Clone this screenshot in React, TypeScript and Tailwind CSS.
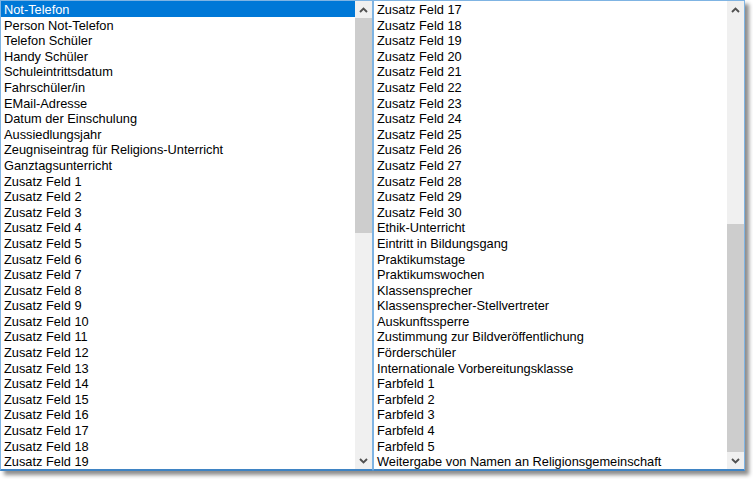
import React from "react"

const leftItems = [
  "Not-Telefon",
  "Person Not-Telefon",
  "Telefon Schüler",
  "Handy Schüler",
  "Schuleintrittsdatum",
  "Fahrschüler/in",
  "EMail-Adresse",
  "Datum der Einschulung",
  "Aussiedlungsjahr",
  "Zeugniseintrag für Religions-Unterricht",
  "Ganztagsunterricht",
  ...Array.from({ length: 19 }, (_, i) => `Zusatz Feld ${i + 1}`),
]

const rightItems = [
  ...Array.from({ length: 14 }, (_, i) => `Zusatz Feld ${i + 17}`),
  "Ethik-Unterricht",
  "Eintritt in Bildungsgang",
  "Praktikumstage",
  "Praktikumswochen",
  "Klassensprecher",
  "Klassensprecher-Stellvertreter",
  "Auskunftssperre",
  "Zustimmung zur Bildveröffentlichung",
  "Förderschüler",
  "Internationale Vorbereitungsklasse",
  "Farbfeld 1",
  "Farbfeld 2",
  "Farbfeld 3",
  "Farbfeld 4",
  "Farbfeld 5",
  "Weitergabe von Namen an Religionsgemeinschaft",
]

const Chevron = ({ up }: { up?: boolean }) => (
  <svg width="9" height="6" viewBox="0 0 9 6" className="block">
    <path
      d={up ? "M1 5 L4.5 1.5 L8 5" : "M1 1 L4.5 4.5 L8 1"}
      fill="none"
      stroke="#505050"
      strokeWidth="1.9"
    />
  </svg>
)

// thumbTop / thumbHeight in px relative to the track
const ScrollBar = ({ thumbTop, thumbHeight }: { thumbTop: number; thumbHeight: number }) => (
  <div className="flex w-[17px] shrink-0 flex-col bg-[#f0f0f0]">
    <div className="flex h-[17px] items-center justify-center">
      <Chevron up />
    </div>
    <div className="relative flex-1">
      <div
        className="absolute left-0 right-0 bg-[#cdcdcd]"
        style={{ top: thumbTop, height: thumbHeight }}
      />
    </div>
    <div className="flex h-[17px] items-center justify-center">
      <Chevron />
    </div>
  </div>
)

const ListBox = ({
  items,
  selected,
  thumbTop,
  thumbHeight,
  className,
}: {
  items: string[]
  selected?: number
  thumbTop: number
  thumbHeight: number
  className?: string
}) => (
  <div
    className={`flex h-full border border-[#7fb4e3] border-b-2 border-b-[#3f84c4] bg-white ${className ?? ""}`}
  >
    <div className="flex-1 overflow-hidden">
      {items.map((item, i) => (
        <div
          key={item}
          className={`h-[15.6px] whitespace-nowrap pl-[3px] pt-[1px] text-[12.8px] leading-[15px] ${
            i === selected ? "bg-[#0078d7] text-white" : "text-black"
          }`}
        >
          {item}
        </div>
      ))}
    </div>
    <ScrollBar thumbTop={thumbTop} thumbHeight={thumbHeight} />
  </div>
)

export default function App() {
  return (
    <div
      className="h-[479px] w-[753px] bg-white"
      style={{ fontFamily: '"Liberation Sans", Arial, sans-serif' }}
    >
      <div className="flex h-[471px] w-[745px] shadow-[4px_4px_4px_rgba(0,0,0,0.45)]">
        <ListBox
          items={leftItems}
          selected={0}
          thumbTop={0}
          thumbHeight={215}
          className="w-[373px]"
        />
        <ListBox
          items={rightItems}
          thumbTop={206}
          thumbHeight={228}
          className="w-[372px]"
        />
      </div>
    </div>
  )
}
